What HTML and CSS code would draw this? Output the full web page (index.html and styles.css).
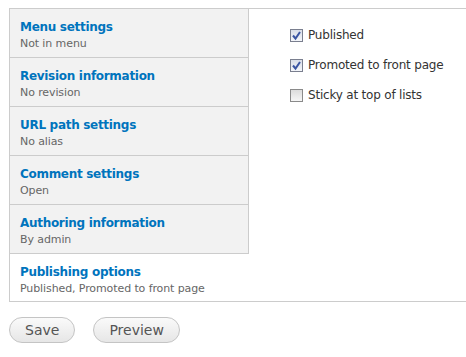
FILE: index.html
```html
<!DOCTYPE html>
<html>
<head>
<meta charset="utf-8">
<link rel="stylesheet" href="styles.css">
</head>
<body>
<div class="page">
  <div class="vtabs">
    <ul class="tabs">
      <li class="tab"><a class="title">Menu settings</a><span class="summary">Not in menu</span></li>
      <li class="tab"><a class="title">Revision information</a><span class="summary">No revision</span></li>
      <li class="tab"><a class="title">URL path settings</a><span class="summary">No alias</span></li>
      <li class="tab"><a class="title">Comment settings</a><span class="summary">Open</span></li>
      <li class="tab"><a class="title">Authoring information</a><span class="summary">By admin</span></li>
      <li class="tab selected"><a class="title">Publishing options</a><span class="summary">Published, Promoted to front page</span></li>
    </ul>
    <div class="pane">
      <label class="opt"><span class="cb checked"><svg viewBox="0 0 13 13" width="13" height="13"><path d="M3 6.5 L5.5 9.5 L10 3" fill="none" stroke="#3a55a3" stroke-width="2"/></svg></span>Published</label>
      <label class="opt"><span class="cb checked"><svg viewBox="0 0 13 13" width="13" height="13"><path d="M3 6.5 L5.5 9.5 L10 3" fill="none" stroke="#3a55a3" stroke-width="2"/></svg></span>Promoted to front page</label>
      <label class="opt"><span class="cb"></span>Sticky at top of lists</label>
    </div>
  </div>
  <div class="actions">
    <button class="btn">Save</button>
    <button class="btn">Preview</button>
  </div>
</div>
</body>
</html>
```
FILE: styles.css
```css
html, body {
  margin: 0;
  padding: 0;
  background: #fff;
  overflow: hidden;
}
body {
  font-family: "DejaVu Sans", Verdana, sans-serif;
}
.page {
  padding: 8px 0 0 9px;
}
.vtabs {
  display: flex;
  border: 1px solid #ccc;
  border-right: none;
}
.tabs {
  list-style: none;
  margin: 0;
  padding: 0;
  width: 239px;
  flex: none;
}
.tab {
  display: flex;
  flex-direction: column;
  background: #f2f2f2;
  border-right: 1px solid #ccc;
  border-bottom: 1px solid #ccc;
  padding: 9px 10px 5px 10px;
  height: 34px;
}
.tab.selected {
  background: #fff;
  border-right: none;
  border-bottom: none;
  height: 33px;
}
.title {
  color: #0074bd;
  font-weight: bold;
  font-size: 12px;
  line-height: 18px;
  letter-spacing: -0.3px;
}
.summary {
  color: #666;
  font-size: 11px;
  line-height: 16px;
  letter-spacing: -0.1px;
}
.pane {
  flex: 1;
  padding: 18px 0 0 40px;
  display: flex;
  flex-direction: column;
  gap: 13px;
}
.opt {
  display: flex;
  align-items: center;
  font-size: 12px;
  line-height: 17px;
  color: #333;
  letter-spacing: -0.2px;
}
.cb {
  width: 11px;
  height: 11px;
  border: 1px solid #8a8a8a;
  background: linear-gradient(#dcdcdc, #f6f6f6);
  margin-left: 1px;
  margin-right: 5px;
  position: relative;
}
.cb svg {
  position: absolute;
  left: -1px;
  top: -1px;
}
.cb.checked {
  border-color: #7a7f8f;
  background: linear-gradient(#d8dde8, #f4f6fa);
}
.actions {
  display: flex;
  gap: 18px;
  padding-top: 15px;
}
.btn {
  font-family: "DejaVu Sans", Verdana, sans-serif;
  font-size: 14px;
  color: #555;
  height: 26px;
  border: 1px solid #c4c4c4;
  border-radius: 13px;
  background: linear-gradient(#fafafa, #e6e6e6);
  padding: 0 15px;
}
```
